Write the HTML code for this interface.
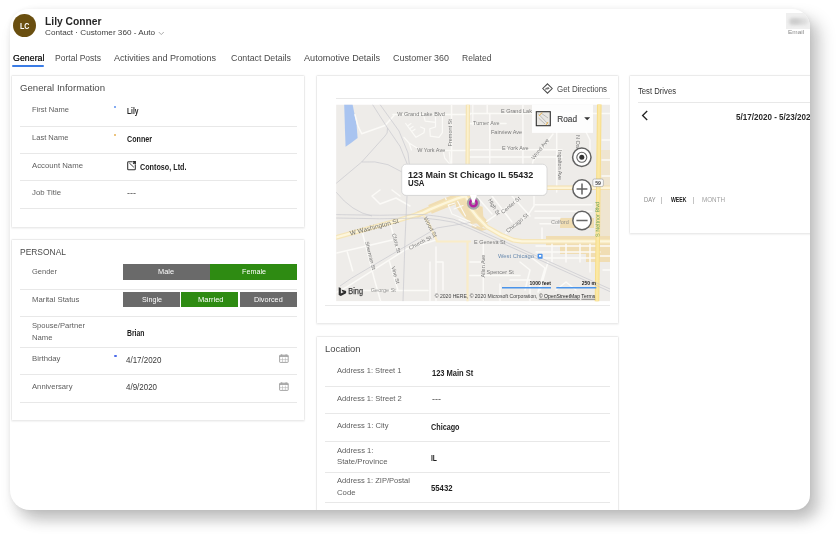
<!DOCTYPE html>
<html>
<head>
<meta charset="utf-8">
<title>Lily Conner - Contact</title>
<style>
html,body{margin:0;padding:0;background:#fff;}
body{width:840px;height:540px;overflow:hidden;position:relative;font-family:"Liberation Sans",sans-serif;color:#333;}
#card{position:absolute;left:10px;top:9px;width:800px;height:501px;background:#fff;border-radius:19px 18px 15px 20px;
  box-shadow:3px 10px 14px rgba(0,0,0,0.11), 11px 9px 16px rgba(0,0,0,0.17), 0 0 5px rgba(0,0,0,0.05);overflow:hidden;}
#in{position:absolute;left:-10px;top:-9px;width:840px;height:540px;filter:blur(0.32px);}
.t{position:absolute;white-space:nowrap;line-height:1;transform-origin:0 0;}
.box{position:absolute;border:1px solid #ebebeb;background:#fff;box-sizing:border-box;border-radius:1.5px;box-shadow:0 0.5px 1.5px rgba(0,0,0,0.05);}
.sep{position:absolute;height:1px;background:#e8e8e8;}
.btn{position:absolute;height:15.4px;}
.gray{background:#6a6a6a;}
.green{background:#2e8b12;}
.abs{position:absolute;}
</style>
</head>
<body>
<div id="card"><div id="in">

<!-- header avatar -->
<div class="abs" style="left:12.9px;top:14.2px;width:22.8px;height:22.8px;border-radius:50%;background:#6a4f10;"></div>
<svg class="abs" style="left:158.4px;top:30.6px;" width="7" height="5" viewBox="0 0 7 5"><path d="M0.8 1 L3.3 3.6 L5.8 1" fill="none" stroke="#999" stroke-width="0.8"/></svg>
<!-- blurred field top-right -->
<div class="abs" style="left:785.8px;top:13px;width:25px;height:16px;background:#efefef;"></div><div class="abs" style="left:788.5px;top:17.5px;width:19px;height:7px;border-radius:3.5px;background:linear-gradient(90deg,#d2d2d2,#cccccc 35%,#dadada 70%,#e2e2e2);filter:blur(1.5px);"></div>

<!-- tab underline -->
<div class="abs" style="left:12px;top:64.7px;width:32px;height:2.6px;background:#3a7ce6;border-radius:1.3px;"></div>

<!-- panels -->
<div class="box" style="left:11px;top:75px;width:294px;height:153px;"></div>
<div class="box" style="left:11px;top:239px;width:294px;height:182px;"></div>
<div class="box" style="left:316px;top:75px;width:302.8px;height:249px;"></div>
<div class="box" style="left:316px;top:336px;width:302.8px;height:200px;"></div>
<div class="box" style="left:629px;top:75px;width:200px;height:159px;"></div>

<!-- panel 1 separators -->
<div class="sep" style="left:20px;top:126px;width:277px;"></div>
<div class="sep" style="left:20px;top:153px;width:277px;"></div>
<div class="sep" style="left:20px;top:180px;width:277px;"></div>
<div class="sep" style="left:20px;top:208px;width:277px;"></div>
<!-- required marks -->
<div class="abs" style="left:114.3px;top:106.2px;width:2.2px;height:2.2px;background:#5b8fee;border-radius:50%;"></div>
<div class="abs" style="left:114.3px;top:133.8px;width:2.2px;height:2.2px;background:#e6b055;border-radius:50%;"></div>
<div class="abs" style="left:114.3px;top:355.2px;width:2.3px;height:2.3px;background:#4b6bea;border-radius:50%;"></div>
<!-- account icon -->
<svg class="abs" style="left:127px;top:161px;" width="10" height="10" viewBox="0 0 10 10"><path d="M5.4 0.7 H1.6 Q0.7 0.7 0.7 1.6 V7.9 Q0.7 8.8 1.6 8.8 H7.4 Q8.3 8.8 8.3 7.9 V3.4" fill="none" stroke="#2e2e2e" stroke-width="1.05"/><path d="M2.3 2 L6.9 6.3" fill="none" stroke="#2e2e2e" stroke-width="0.9"/><path d="M5.6 0.7 H8.3 V3.3 M8.3 0.7 L6.2 2.8" fill="none" stroke="#2e2e2e" stroke-width="1.3"/></svg>

<!-- panel 2 separators -->
<div class="sep" style="left:20px;top:289px;width:277px;"></div>
<div class="sep" style="left:20px;top:316.3px;width:277px;"></div>
<div class="sep" style="left:20px;top:346.7px;width:277px;"></div>
<div class="sep" style="left:20px;top:374.1px;width:277px;"></div>
<div class="sep" style="left:20px;top:402px;width:277px;"></div>
<!-- option buttons -->
<div class="btn gray"  style="left:122.5px;top:264px;width:87.5px;height:15.8px;"></div>
<div class="btn green" style="left:210px;top:264px;width:87px;height:15.8px;"></div>
<div class="btn gray"  style="left:122.5px;top:292px;width:57.6px;"></div>
<div class="btn green" style="left:181.1px;top:292px;width:57.2px;"></div>
<div class="btn gray"  style="left:239.5px;top:292px;width:57.5px;"></div>
<!-- calendar icons -->
<svg class="abs" style="left:279px;top:354px;" width="10" height="9" viewBox="0 0 10 9"><rect x="0.6" y="1.2" width="8.6" height="7.2" rx="0.6" fill="none" stroke="#969696" stroke-width="0.85"/><path d="M0.6 2.2 H9.2" stroke="#969696" stroke-width="1.2" fill="none"/><path d="M2.7 0.2 V1.6 M7.1 0.2 V1.6" stroke="#969696" stroke-width="0.8" fill="none"/><path d="M3.5 3.6 V8.2 M6.4 3.6 V8.2 M0.8 5.6 H9" stroke="#b4b4b4" stroke-width="0.6" fill="none"/></svg>
<svg class="abs" style="left:279px;top:381.5px;" width="10" height="9" viewBox="0 0 10 9"><rect x="0.6" y="1.2" width="8.6" height="7.2" rx="0.6" fill="none" stroke="#969696" stroke-width="0.85"/><path d="M0.6 2.2 H9.2" stroke="#969696" stroke-width="1.2" fill="none"/><path d="M2.7 0.2 V1.6 M7.1 0.2 V1.6" stroke="#969696" stroke-width="0.8" fill="none"/><path d="M3.5 3.6 V8.2 M6.4 3.6 V8.2 M0.8 5.6 H9" stroke="#b4b4b4" stroke-width="0.6" fill="none"/></svg>

<!-- map panel -->
<svg class="abs" style="left:542.1px;top:82.7px;" width="11" height="11" viewBox="0 0 11 11"><path d="M5.5 0.8 L10.2 5.5 L5.5 10.2 L0.8 5.5 Z" fill="none" stroke="#4a4a4a" stroke-width="1.05"/><path d="M3.9 6.9 V5.3 H6.7 M5.7 4.1 L6.9 5.3 L5.7 6.5" fill="none" stroke="#4a4a4a" stroke-width="0.9"/></svg>
<div class="sep" style="left:336px;top:98px;width:274px;"></div>
<div class="sep" style="left:325px;top:305px;width:285px;background:#e9e9e9;"></div>
<svg class="abs" style="left:336px;top:104px;transform:translateZ(0);will-change:transform;" width="274" height="198" viewBox="336 104 274 198" font-family="Liberation Sans, sans-serif">
<defs><clipPath id="mc"><rect x="336.2" y="104.6" width="273.8" height="196.7"/></clipPath></defs>
<g clip-path="url(#mc)">
<rect x="336" y="104.5" width="274" height="197" fill="#eeece9"/>
<!-- water -->
<path d="M344.2 104.5 L352.6 104.5 L354.3 113 L356.6 125 L357.6 138 L351 143 L345.6 146.8 L345 131 Z" fill="#a9c4f0"/>
<!-- tan commercial zones -->
<g fill="#f1dcae" opacity="0.9">
<path d="M430 209.3 L445.5 203 L457.4 198.3 L465.7 196.4 L469.3 203 L471 209 L477.6 217.4 L485 225" fill="none" stroke="#f1dcae" stroke-width="9.5" stroke-linejoin="round"/>
<path d="M418 214.5 L430 209.3" fill="none" stroke="#f1dcae" stroke-width="6" stroke-linecap="round"/>
<path d="M456 201 L467 199 L472 212 L480 223 L471 224 L462 215 L456 207 Z"/>
<path d="M477.6 205.5 L482.6 206.7 L483.6 219.8 L488 226.5 L482.4 223 L477.6 216.2 Z"/>
<path d="M471.7 224 L487 229.6 L481.2 231 L471.7 227.4 Z"/>
<path d="M546 236 H610 V262 H586 V254 H560 V246 H546 Z"/>
<path d="M560 218 H594 V228 H560 Z"/>
<path d="M600 150 H610 V236 H600 Z" opacity="0.45"/>

</g>
<!-- minor roads (white) -->
<g fill="none" stroke="#fbfaf7" stroke-width="1.5" stroke-linecap="round" stroke-linejoin="round">
<path d="M355 114.7 L358 126 L361.7 133.8 L385 125.5 L394 115.5"/>
<path d="M393 114.4 H470 M470 113.4 H610"/>
<path d="M443 150.6 H470 M470 149.8 H562"/>
<path d="M470 123.6 H506 M470 157 H562"/>
<path d="M451.6 104.5 V166"/>
<path d="M487.2 104.5 V113.5 M489.8 113.5 V192 M522.9 104.5 V192 M556.7 132 V192"/>
<path d="M553 134 L533 161 L528 192"/>
<path d="M405.7 123.5 L416 137.3 L424 132.7 L424.6 128.7 L420.6 127 M407.5 126 L411 123.6 M409.6 128.8 L413 126.4 M411.7 131.6 L415 129.2 M435.5 117.2 V127 L429.8 128.7 L430.3 136.1 L439 137.3 L442.4 132.7 V116.6 M424 116.6 L425.2 121.2 L435.5 122.4" stroke-width="1.2"/>
<path d="M404 137.3 L409 143 L418.3 148.8 M409 143 L411.4 150 M443.5 152.2 L444.7 158 L449.3 163.7 M449.3 152.2 L450.4 163.7 M472.8 104.5 V125 M470 123.6 H478" stroke-width="1.2"/>
<path d="M586 132 L590 140 V150 M602 140 H610 M602 160 H610 M602 176 H610"/>
<!-- SW grid -->
<path d="M362.5 233 L374 278 L380.7 301.5 M390.8 225.5 L398.3 253.8 M389.3 261.3 L398 290.4 M336.7 253 L393.3 239.7 M336 292.5 L347.3 286.7 L406 249.3 L436.7 239.7 M347.3 252 L352.7 270.7 M363.3 290.4 H428"/>
<path d="M424 216.3 L436.7 241.3"/>
<path d="M380 190 L372 196 L380 204 L396 198 L410 206 M400 196 L392 190"/>
<!-- around pin -->
<path d="M445.5 198 L452 214 L470 221.5 M457.5 201 L465.5 216 M454 209 L463 205.5 M459 219.5 L476 226.5 M448 205 L455 203" stroke-width="1.1"/>
<!-- NE of pin diagonals -->
<path d="M486.7 221.3 L520 198 M505.8 233 L528.3 214.7 L534 206 V192 M492 196 L512 222 M478 198 L492 214 M512 196 L530 216"/>
<!-- east grid -->
<path d="M535 204.7 H592 M535 211.3 H592 M535 218 H560 M540 223.8 H560 M542 228 V242"/>
<!-- south -->
<path d="M483.3 242 V301.5 M470 275.5 H520 M470 262 H483"/>
<path d="M436 247 V301 M436 262 L443 262 V290 M430 262 V301"/>
<path d="M520 262 L530 270 L525 290 M532 258 L545 268 L538 292 M548 262 L540 290 M510 280 H530 V301 M500 284 V301 M556 290 L566 282 L576 290"/>
<path d="M536 246 H600 M536 252 H600 M540 258 H596 M552 242 V262 M566 242 V262 M580 242 V262 M590 242 V272 M600 246 H610 M600 256 H610 M603 270 H610"/>
</g>
<!-- cream secondary roads -->
<g fill="none" stroke="#f9ecc8" stroke-width="2.2" stroke-linecap="round" stroke-linejoin="round">


<path d="M436.7 241.5 H470 M467.5 241.5 V301.5 M424 216.3 L430 225.7 L437 241"/>
</g>
<g fill="none"><path d="M546 187.7 H610" stroke="#f3dfae" stroke-width="4.4"/><path d="M546 187.7 H610" stroke="#fdf4d8" stroke-width="2.6"/></g>
<g fill="none"><path d="M467.9 104.5 L467.4 196" stroke="#f4e2b0" stroke-width="4.2"/><path d="M467.9 104.5 L467.4 196" stroke="#fcf1cc" stroke-width="2"/></g>
<!-- major roads (yellow) -->
<g fill="none" stroke-linecap="round" stroke-linejoin="round">
<path d="M336 237.4 L400 219.7 L423.3 212.6 L430 209.3 L445.5 203 L457.4 198.3 L465.7 196.2 L469.3 203 L471 209 L477.6 217.4 L487 227 L501.4 235.2 L513.3 240.2 L522 241.4 H610" stroke="#f5e5b8" stroke-width="4.8"/>
<path d="M336 237.4 L400 219.7 L423.3 212.6 L430 209.3 L445.5 203 L457.4 198.3 L465.7 196.2 L469.3 203 L471 209 L477.6 217.4 L487 227 L501.4 235.2 L513.3 240.2 L522 241.4 H610" stroke="#fdf6dc" stroke-width="2.4"/>
<path d="M599.3 104.5 L597.0 301.5" stroke="#f7dd8a" stroke-width="4.6"/>
<path d="M599.3 104.5 L597.0 301.5" stroke="#fbe8a4" stroke-width="2.6"/>
</g>
<!-- railways -->
<g fill="none" stroke="#c8c9cf" stroke-width="0.7">
<path d="M372.5 104.5 L387.5 128 L400 146.3 L407.5 164.7"/>
<path d="M380 104.5 L399 131 L408 153 L409.5 166"/>
<path d="M387.5 128 Q388 134 385 136 L361.7 162 L336 183.5"/>
<path d="M361.7 162 Q375 160.5 388 164.7 L402 172"/>
<path d="M336 214.6 Q380 216 423 214.5 Q440 216 453.8 219.3 L470 226 L610 289"/>
<path d="M336 218 Q380 219.5 423 218 Q440 219.5 453.8 222.3 L470 228.6 L610 291.6"/>
<path d="M407 196 L405 240 L403 301.5"/>
<path d="M340 286 L351.7 278 L436.7 228 L470 222.6"/>
<path d="M336 192 Q352 212 372 216"/>
</g>
<!-- street labels -->
<g fill="#6d6d6d" font-size="5.5" opacity="0.9">
<text x="397.2" y="115.7">W Grand Lake Blvd</text>
<text x="417.2" y="151.9">W York Ave</text>
<text x="501" y="113.4">E Grand Lak</text>
<text x="473" y="124.9">Turner Ave</text>
<text x="491" y="133.9">Fairview Ave</text>
<text x="502" y="150.4">E York Ave</text>
<text x="474" y="243.9">E Geneva St</text>
<text x="486.5" y="274.4">Spencer St</text>
<text x="370.8" y="292.2" fill="#8a8a8a">George St</text>
<text x="551" y="223.9" fill="#888">Colford</text>
<text x="498" y="257.9" fill="#5a7fa8" font-size="5.8">West Chicago</text>
<text transform="translate(452.4 146.4) rotate(-90)">Fremont St</text>
<text transform="translate(484.6 277.5) rotate(-90)">Allen Ave</text>
<text transform="translate(350.6 235.6) rotate(-14.8)" font-size="6.5" fill="#666">W Washington St</text>
<text transform="translate(365 242) rotate(76)">Sherman St</text>
<text transform="translate(392 234) rotate(75)">Clara St</text>
<text transform="translate(423.6 218) rotate(63)" font-size="5.8">Wood St</text>
<text transform="translate(410 250) rotate(-27)">Church St</text>
<text transform="translate(391.2 267) rotate(74)">Vine St</text>
<text transform="translate(488 200) rotate(60)">High St</text>
<text transform="translate(503 214) rotate(-40)">Center St</text>
<text transform="translate(508 233) rotate(-40)">Chicago St</text>
<text transform="translate(534 160) rotate(-52)">Wood Ave</text>
<text transform="translate(558 150) rotate(90)">Ingalton Ave</text>
<text transform="translate(575.6 135) rotate(90)">N Oak</text>
<text transform="translate(599.6 237) rotate(-90.6)" fill="#5c9a58">S Neltnor Blvd</text>
</g>
<!-- transit icon -->
<rect x="537.6" y="253.7" width="5" height="5" rx="0.8" fill="#4a90e8"/><rect x="539" y="255" width="2.2" height="1.8" fill="#fff"/>
<!-- route 59 shield -->
<rect x="592.8" y="179" width="10.6" height="7.6" rx="1.6" fill="#fafafa" stroke="#9a9a9a" stroke-width="0.6"/>
<text x="595.2" y="185.1" font-size="5.2" font-weight="700" fill="#444">59</text>
<!-- road-type control -->
<rect x="532" y="104.5" width="61" height="28.4" fill="#fff" opacity="0.88"/>
<rect x="536.3" y="111.7" width="14" height="14" fill="#e9e7e3" stroke="#2e2e2e" stroke-width="1.1"/>
<path d="M538 113.5 L548.5 124.5 M538.5 118 L545 124 M541 113 L548 118" stroke="#a8a8a8" stroke-width="0.7" fill="none"/>
<path d="M542 112.5 L539 116 M546 125 L548 122" stroke="#f0b040" stroke-width="0.9" fill="none"/>
<text x="557.2" y="122.3" font-size="8.6" fill="#444" stroke="#444" stroke-width="0.15" textLength="19.8" lengthAdjust="spacingAndGlyphs">Road</text>
<path d="M584.2 117.3 H590.2 L587.2 120.3 Z" fill="#333"/>
<!-- nav controls -->
<g fill="#fff" stroke="#626262" stroke-width="1.5">
<circle cx="581.8" cy="157.3" r="9.2"/>
<circle cx="582" cy="189" r="9.2"/>
<circle cx="582" cy="220.5" r="9.2"/>
</g>
<circle cx="581.8" cy="157.3" r="5" fill="none" stroke="#626262" stroke-width="1.1"/>
<circle cx="581.8" cy="157.3" r="2.5" fill="#333"/>
<path d="M576.6 189 H587.4 M582 183.6 V194.4" stroke="#626262" stroke-width="1.5"/>
<path d="M576.4 220.5 H587.6" stroke="#686868" stroke-width="1.5"/>
<!-- pin -->
<circle cx="473.4" cy="203.2" r="6.5" fill="#a6a6a9"/>
<circle cx="473.4" cy="203" r="3.3" fill="none" stroke="#b3219f" stroke-width="2.4"/>
<!-- callout -->
<rect x="401.9" y="164.6" width="145" height="31.3" rx="4.5" fill="#c4c4c4" opacity="0.55"/><rect x="401.7" y="164.2" width="145.3" height="31.2" rx="4.5" fill="#fff" stroke="#cfcfcf" stroke-width="0.7"/>
<path d="M470 195.1 L472.4 202.8 H474.4 L476.8 195.1 Z" fill="#fff"/>

<text x="408" y="178.1" font-size="8.3" font-weight="700" fill="#222" textLength="125.3" lengthAdjust="spacingAndGlyphs">123 Main St Chicago IL 55432</text>
<text x="408" y="185.9" font-size="8.3" font-weight="700" fill="#222" textLength="16.5" lengthAdjust="spacingAndGlyphs">USA</text>
<!-- bing logo -->
<path transform="translate(338.7 287.2) scale(0.74 0.69)" d="M0 0 L2.9 1 V9.3 L6.9 7 L4.9 6.1 L3.7 3.3 L10 5.5 V8.7 L2.9 12.8 L0 11.2 Z" fill="#2e2e2e"/>
<text x="348.3" y="294.4" font-size="9.2" fill="#3a3a3a" stroke="#3a3a3a" stroke-width="0.25" textLength="14.7" lengthAdjust="spacingAndGlyphs">Bing</text>
<!-- scale bars -->
<path d="M502 287.7 H551 M556.3 287.7 H596.3" stroke="#4a94ea" stroke-width="1.5"/>
<text x="551" y="285.1" font-size="5" fill="#222" text-anchor="end" font-weight="700">1000 feet</text>
<text x="596" y="285.1" font-size="5" fill="#222" text-anchor="end" font-weight="700">250 m</text>
<text x="434.8" y="297.9" font-size="5" fill="#444" textLength="160.4" lengthAdjust="spacingAndGlyphs">© 2020 HERE, © 2020 Microsoft Corporation, <tspan text-decoration="underline" fill="#222">© OpenStreetMap</tspan>  <tspan text-decoration="underline" fill="#222">Terms</tspan></text>
</g>
</svg>


<!-- location separators -->
<div class="sep" style="left:325px;top:386px;width:285px;"></div>
<div class="sep" style="left:325px;top:413px;width:285px;"></div>
<div class="sep" style="left:325px;top:440.6px;width:285px;"></div>
<div class="sep" style="left:325px;top:471.6px;width:285px;"></div>
<div class="sep" style="left:325px;top:501.6px;width:285px;"></div>

<!-- test drives -->
<div class="sep" style="left:638px;top:102px;width:180px;"></div>
<svg class="abs" style="left:640.5px;top:110px;" width="8" height="11" viewBox="0 0 8 11"><path d="M6.2 1 L1.6 5.5 L6.2 10" fill="none" stroke="#222" stroke-width="1.3"/></svg>

<span class="t" style="left:19.60px;top:21.47px;font-size:9.6px;color:#fff;font-weight:700;transform:scaleX(0.7424);">LC</span>
<span class="t" style="left:45.00px;top:15.18px;font-size:11.6px;color:#262626;font-weight:700;transform:scaleX(0.8858);">Lily Conner</span>
<span class="t" style="left:45.00px;top:28.83px;font-size:8px;color:#3c3c3c;transform:scaleX(1.0179);">Contact · Customer 360 - Auto</span>
<span class="t" style="left:787.90px;top:28.85px;font-size:6.2px;color:#8a8a8a;transform:scaleX(1.0398);">Email</span>
<span class="t" style="left:12.50px;top:52.92px;font-size:9.9px;color:#1f1f1f;transform:scaleX(0.8964);text-shadow:0 0 0.4px #1f1f1f;">General</span>
<span class="t" style="left:55.00px;top:52.92px;font-size:9.9px;color:#4a4a4a;transform:scaleX(0.8638);">Portal Posts</span>
<span class="t" style="left:114.00px;top:52.92px;font-size:9.9px;color:#4a4a4a;transform:scaleX(0.9200);">Activities and Promotions</span>
<span class="t" style="left:230.50px;top:52.92px;font-size:9.9px;color:#4a4a4a;transform:scaleX(0.8959);">Contact Details</span>
<span class="t" style="left:304.00px;top:52.92px;font-size:9.9px;color:#4a4a4a;transform:scaleX(0.9231);">Automotive Details</span>
<span class="t" style="left:393.00px;top:52.92px;font-size:9.9px;color:#4a4a4a;transform:scaleX(0.9028);">Customer 360</span>
<span class="t" style="left:462.00px;top:52.92px;font-size:9.9px;color:#4a4a4a;transform:scaleX(0.8665);">Related</span>
<span class="t" style="left:20.00px;top:83.17px;font-size:9.6px;color:#4a4a4a;transform:scaleX(1.0024);">General Information</span>
<span class="t" style="left:32.00px;top:106.04px;font-size:8.1px;color:#5e5e5e;transform:scaleX(0.9349);">First Name</span>
<span class="t" style="left:127.00px;top:107.40px;font-size:8.5px;color:#1e1e1e;font-weight:700;transform:scaleX(0.7846);">Lily</span>
<span class="t" style="left:32.00px;top:133.54px;font-size:8.1px;color:#5e5e5e;transform:scaleX(0.9325);">Last Name</span>
<span class="t" style="left:127.00px;top:134.90px;font-size:8.5px;color:#1e1e1e;font-weight:700;transform:scaleX(0.8403);">Conner</span>
<span class="t" style="left:32.00px;top:162.04px;font-size:8.1px;color:#5e5e5e;transform:scaleX(0.9606);">Account Name</span>
<span class="t" style="left:140.00px;top:163.30px;font-size:8.5px;color:#1e1e1e;font-weight:700;transform:scaleX(0.8491);">Contoso, Ltd.</span>
<span class="t" style="left:32.00px;top:189.04px;font-size:8.1px;color:#5e5e5e;transform:scaleX(0.9617);">Job Title</span>
<span class="t" style="left:127.00px;top:190.46px;font-size:8.2px;color:#444;transform:scaleX(1.0992);">---</span>
<span class="t" style="left:20.00px;top:246.97px;font-size:9.6px;color:#4a4a4a;transform:scaleX(0.8801);">PERSONAL</span>
<span class="t" style="left:32.00px;top:268.04px;font-size:8.1px;color:#5e5e5e;transform:scaleX(0.9259);">Gender</span>
<span class="t" style="left:32.00px;top:295.84px;font-size:8.1px;color:#5e5e5e;transform:scaleX(0.9599);">Marital Status</span>
<span class="t" style="left:32.00px;top:322.34px;font-size:8.1px;color:#5e5e5e;transform:scaleX(0.9422);">Spouse/Partner</span>
<span class="t" style="left:32.00px;top:334.04px;font-size:8.1px;color:#5e5e5e;transform:scaleX(0.9493);">Name</span>
<span class="t" style="left:127.00px;top:329.20px;font-size:8.5px;color:#1e1e1e;font-weight:700;transform:scaleX(0.8052);">Brian</span>
<span class="t" style="left:32.00px;top:355.34px;font-size:8.1px;color:#5e5e5e;transform:scaleX(0.9595);">Birthday</span>
<span class="t" style="left:126.00px;top:356.37px;font-size:8.3px;color:#3a3a3a;transform:scaleX(0.9615);">4/17/2020</span>
<span class="t" style="left:32.00px;top:382.84px;font-size:8.1px;color:#5e5e5e;transform:scaleX(0.9477);">Anniversary</span>
<span class="t" style="left:126.00px;top:382.77px;font-size:8.3px;color:#3a3a3a;transform:scaleX(0.9598);">4/9/2020</span>
<span class="t" style="left:158.00px;top:268.20px;font-size:7.8px;color:#fff;transform:scaleX(0.9464);">Male</span>
<span class="t" style="left:241.50px;top:268.20px;font-size:7.8px;color:#fff;transform:scaleX(0.9231);">Female</span>
<span class="t" style="left:141.50px;top:295.80px;font-size:7.8px;color:#fff;transform:scaleX(0.9222);">Single</span>
<span class="t" style="left:197.50px;top:295.80px;font-size:7.8px;color:#fff;transform:scaleX(0.9645);">Married</span>
<span class="t" style="left:253.80px;top:295.80px;font-size:7.8px;color:#fff;transform:scaleX(0.9329);">Divorced</span>
<span class="t" style="left:557.00px;top:84.80px;font-size:8.5px;color:#4a4a4a;transform:scaleX(0.9283);">Get Directions</span>
<span class="t" style="left:325.00px;top:343.87px;font-size:9.6px;color:#4a4a4a;transform:scaleX(0.9785);">Location</span>
<span class="t" style="left:336.50px;top:367.04px;font-size:8.1px;color:#5e5e5e;transform:scaleX(0.9308);">Address 1: Street 1</span>
<span class="t" style="left:431.70px;top:368.80px;font-size:8.5px;color:#1e1e1e;font-weight:700;transform:scaleX(0.8828);">123 Main St</span>
<span class="t" style="left:336.50px;top:395.04px;font-size:8.1px;color:#5e5e5e;transform:scaleX(0.9351);">Address 1: Street 2</span>
<span class="t" style="left:431.50px;top:396.46px;font-size:8.2px;color:#444;transform:scaleX(1.0992);">---</span>
<span class="t" style="left:336.50px;top:422.34px;font-size:8.1px;color:#5e5e5e;transform:scaleX(0.9382);">Address 1: City</span>
<span class="t" style="left:431.00px;top:423.20px;font-size:8.5px;color:#1e1e1e;font-weight:700;transform:scaleX(0.8500);">Chicago</span>
<span class="t" style="left:336.50px;top:447.04px;font-size:8.1px;color:#5e5e5e;transform:scaleX(0.9431);">Address 1:</span>
<span class="t" style="left:336.50px;top:458.34px;font-size:8.1px;color:#5e5e5e;transform:scaleX(0.9593);">State/Province</span>
<span class="t" style="left:431.00px;top:453.70px;font-size:8.5px;color:#1e1e1e;font-weight:700;transform:scaleX(0.7934);">IL</span>
<span class="t" style="left:336.50px;top:477.04px;font-size:8.1px;color:#5e5e5e;transform:scaleX(0.9325);">Address 1: ZIP/Postal</span>
<span class="t" style="left:336.50px;top:488.54px;font-size:8.1px;color:#5e5e5e;transform:scaleX(0.9556);">Code</span>
<span class="t" style="left:431.00px;top:483.70px;font-size:8.5px;color:#1e1e1e;font-weight:700;transform:scaleX(0.9095);">55432</span>
<span class="t" style="left:638.00px;top:86.50px;font-size:8.5px;color:#333;transform:scaleX(0.9038);">Test Drives</span>
<span class="t" style="left:735.50px;top:113.10px;font-size:8.5px;color:#2a2a2a;font-weight:700;transform:scaleX(0.9497);">5/17/2020 - 5/23/2020</span>
<span class="t" style="left:643.50px;top:196.67px;font-size:6.3px;color:#8a8a8a;transform:scaleX(0.9212);">DAY</span>
<span class="t" style="left:661.00px;top:196.67px;font-size:6.3px;color:#777;transform:scaleX(0.7924);">|</span>
<span class="t" style="left:670.50px;top:196.67px;font-size:6.3px;color:#222;font-weight:700;transform:scaleX(0.8198);">WEEK</span>
<span class="t" style="left:692.60px;top:196.67px;font-size:6.3px;color:#777;transform:scaleX(0.7924);">|</span>
<span class="t" style="left:702.00px;top:196.67px;font-size:6.3px;color:#a0a0a0;transform:scaleX(0.9959);">MONTH</span>
</div></div>
</body>
</html>
